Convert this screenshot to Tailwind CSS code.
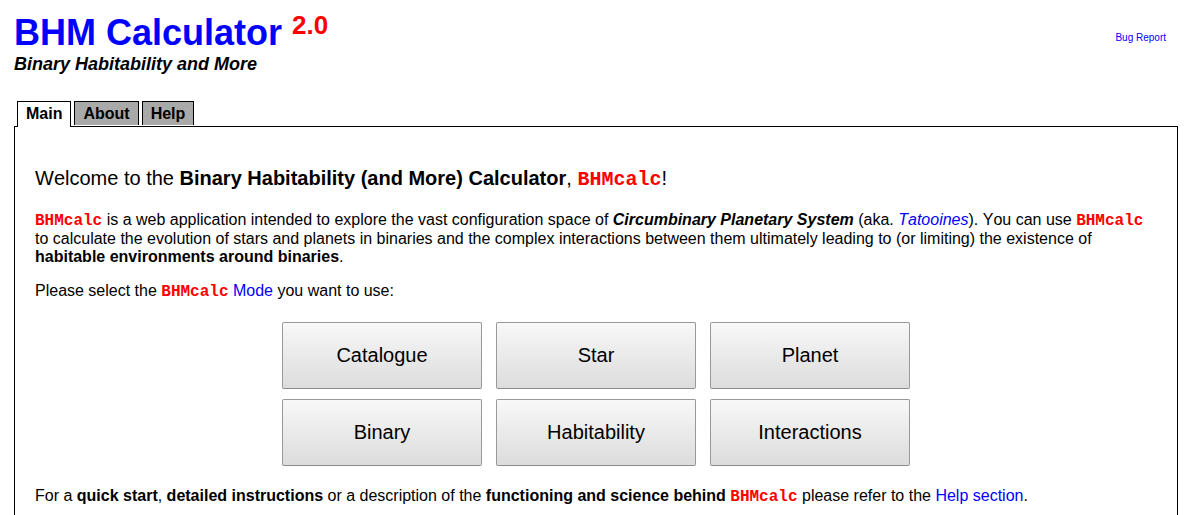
<!DOCTYPE html>
<html lang="en">
<head>
<meta charset="utf-8">
<title>BHM Calculator</title>
<script src="https://cdn.jsdelivr.net/npm/@tailwindcss/browser@4"></script>
</head>
<body class="flex min-h-screen flex-col bg-white px-[14px] pr-4 font-['Liberation_Sans',Arial,sans-serif] text-base leading-[18px] text-black [font-kerning:none]">
<header class="flex items-start justify-between pt-[13px] pr-3">
  <div>
    <h1 class="flex items-start gap-[10px] text-[36px] leading-10 font-bold text-[#0000ff]">BHM Calculator <sup class="top-0 text-[26px] leading-6 text-[#ff0000]">2.0</sup></h1>
    <p class="text-lg leading-[22px] font-bold italic">Binary Habitability and More</p>
  </div>
  <a href="#" class="mt-4 text-[10px] text-[#0000ff]">Bug Report</a>
</header>
<nav class="mt-[26px] ml-[3px] flex items-start gap-[3px] leading-6 font-bold">
  <a href="#" class="relative -mb-px h-[26px] border border-b-0 border-black bg-white px-2" aria-current="page">Main</a>
  <a href="#" class="h-6 border border-b-0 border-black bg-[#a9a9a9] px-2">About</a>
  <a href="#" class="h-6 border border-b-0 border-black bg-[#a9a9a9] px-2">Help</a>
</nav>
<main class="grow border border-b-0 border-black px-5 pt-[39px] pb-2">
  <h2 class="text-xl leading-6">Welcome to the <b>Binary Habitability (and More) Calculator</b>, <b class="font-['Liberation_Mono',monospace] text-[#ff0000]">BHMcalc</b>!</h2>
  <p class="mt-[19px]"><b class="font-['Liberation_Mono',monospace] text-[#ff0000]">BHMcalc</b> is a web application intended to explore the vast configuration space of <b><i>Circumbinary Planetary System</i></b> (aka. <a href="#" class="text-[#0000ff] italic">Tatooines</a>). You can use <b class="font-['Liberation_Mono',monospace] text-[#ff0000]">BHMcalc</b> to calculate the evolution of stars and planets in binaries and the complex interactions between them ultimately leading to (or limiting) the existence of <b>habitable environments around binaries</b>.</p>
  <p class="mt-4">Please select the <b class="font-['Liberation_Mono',monospace] text-[#ff0000]">BHMcalc</b> <a href="#" class="text-[#0000ff]">Mode</a> you want to use:</p>
  <div class="mt-[21px] grid grid-cols-[repeat(3,200px)] justify-center gap-x-[14px] gap-y-[10px] text-xl">
    <button type="button" class="h-[67px] rounded-[2px] border border-[#999] border-b-[#8c8c8c] bg-linear-to-b from-[#f8f8f8] to-[#dcdcdc] pb-0.5">Catalogue</button>
    <button type="button" class="h-[67px] rounded-[2px] border border-[#999] border-b-[#8c8c8c] bg-linear-to-b from-[#f8f8f8] to-[#dcdcdc] pb-0.5">Star</button>
    <button type="button" class="h-[67px] rounded-[2px] border border-[#999] border-b-[#8c8c8c] bg-linear-to-b from-[#f8f8f8] to-[#dcdcdc] pb-0.5">Planet</button>
    <button type="button" class="h-[67px] rounded-[2px] border border-[#999] border-b-[#8c8c8c] bg-linear-to-b from-[#f8f8f8] to-[#dcdcdc] pb-0.5">Binary</button>
    <button type="button" class="h-[67px] rounded-[2px] border border-[#999] border-b-[#8c8c8c] bg-linear-to-b from-[#f8f8f8] to-[#dcdcdc] pb-0.5">Habitability</button>
    <button type="button" class="h-[67px] rounded-[2px] border border-[#999] border-b-[#8c8c8c] bg-linear-to-b from-[#f8f8f8] to-[#dcdcdc] pb-0.5">Interactions</button>
  </div>
  <p class="mt-[21px]">For a <b>quick start</b>, <b>detailed instructions</b> or a description of the <b>functioning and science behind</b> <b class="font-['Liberation_Mono',monospace] text-[#ff0000]">BHMcalc</b> please refer to the <a href="#" class="text-[#0000ff]">Help section</a>.</p>
</main>
</body>
</html>
